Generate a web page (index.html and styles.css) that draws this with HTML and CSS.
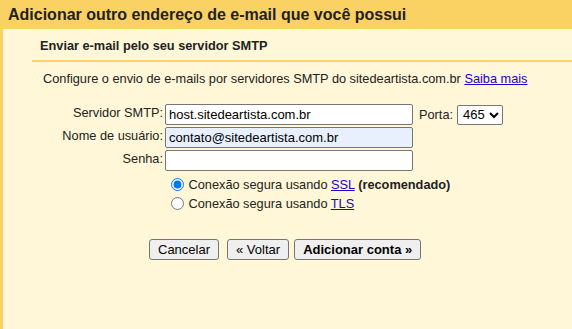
FILE: index.html
```html
<!DOCTYPE html>
<html lang="pt-BR">
<head>
    <meta charset="UTF-8">
    <title>Adicionar outro endereço de e-mail</title>
    <link rel="stylesheet" href="styles.css">
</head>
<body>
    <h1 class="page-title">Adicionar outro endereço de e-mail que você possui</h1>
    <div class="panel">
        <h2 class="section-title">Enviar e-mail pelo seu servidor SMTP</h2>
        <p class="intro">Configure o envio de e-mails por servidores SMTP do sitedeartista.com.br <a href="#">Saiba mais</a></p>
        <form class="smtp-form">
            <label for="server">Servidor SMTP:</label>
            <div class="field-row">
                <input type="text" id="server" value="host.sitedeartista.com.br">
                <label for="port" class="port-label">Porta:</label>
                <select id="port">
                    <option>465</option>
                    <option>587</option>
                    <option>25</option>
                </select>
            </div>
            <label for="user">Nome de usuário:</label>
            <div class="field-row">
                <input type="text" id="user" class="autofilled" value="contato@sitedeartista.com.br">
            </div>
            <label for="pass">Senha:</label>
            <div class="field-row">
                <input type="password" id="pass">
            </div>
            <div class="options">
                <label class="option"><input type="radio" name="sec" checked> Conexão segura usando <a href="#">SSL</a> <b>(recomendado)</b></label>
                <label class="option"><input type="radio" name="sec"> Conexão segura usando <a href="#">TLS</a></label>
            </div>
        </form>
        <div class="actions">
            <button type="button">Cancelar</button>
            <button type="button" class="back">« Voltar</button>
            <button type="submit" class="primary">Adicionar conta »</button>
        </div>
    </div>
</body>
</html>
```

FILE: styles.css
```css
body, html {
    height: 100%;
    margin: 0;
    font-family: "Liberation Sans", Arial, sans-serif;
    font-size: 12.75px;
    color: #222;
    background-color: #fff7d7;
    overflow: hidden;
}
.page-title {
    margin: 0;
    height: 29px;
    padding-left: 8px;
    line-height: 30px;
    font-size: 16px;
    font-weight: bold;
    color: #222;
    background-color: #fad163;
}
.panel {
    border-left: 3px solid #fad163;
    height: calc(100% - 29px);
    box-sizing: border-box;
}
.section-title {
    margin: 0 0 0 29px;
    padding: 9px 0 0 8px;
    height: 22px;
    font-size: 12.75px;
    font-weight: bold;
    border-bottom: 2px solid #fad163;
}
.intro {
    margin: 9px 0 0 40px;
    line-height: 15px;
}
a {
    color: #2200cc;
}
.smtp-form {
    display: grid;
    grid-template-columns: 160px auto;
    column-gap: 2px;
    row-gap: 2px;
    margin-top: 18px;
}
.smtp-form > label {
    text-align: right;
    line-height: 18px;
}
.field-row {
    display: flex;
    align-items: center;
}
input[type="text"], input[type="password"] {
    width: 248px;
    height: 21px;
    box-sizing: border-box;
    margin: 0;
    padding: 1px 3px;
    font-family: inherit;
    font-size: 13px;
    color: #000;
    background: #fff;
    border: 1px solid #767676;
    border-radius: 2px;
}
input.autofilled {
    background: #e8f0fe;
}
.port-label {
    margin-left: 6px;
    margin-right: 4px;
}
select {
    width: 46px;
    height: 20px;
    font-family: inherit;
    font-size: 13px;
    padding: 0 0 0 1px;
    border: 1px solid #767676;
    border-radius: 2px;
    background: #fff;
}
.options {
    grid-column: 2;
    padding: 2px 0 0 6px;
}
.option {
    display: block;
    height: 19px;
    line-height: 19px;
}
.option input {
    margin: 0 1px 0 0;
    width: 13px;
    height: 13px;
    vertical-align: -2px;
}
.actions {
    display: flex;
    margin: 26px 0 0 146px;
}
button {
    height: 21px;
    padding: 0 8px;
    font-family: inherit;
    font-size: 13px;
    color: #000;
    background-color: #efefef;
    border: 1px solid #767676;
    border-radius: 3px;
}
.back {
    margin-left: 8px;
}
.primary {
    margin-left: 5px;
    font-weight: bold;
}
```
